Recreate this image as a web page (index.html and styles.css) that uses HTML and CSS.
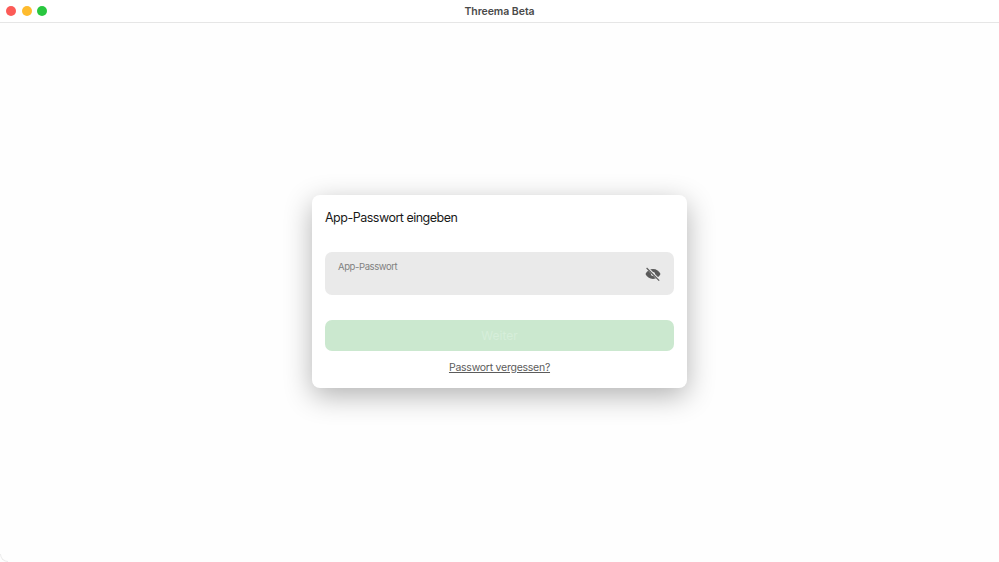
FILE: index.html
```html
<!DOCTYPE html>
<html lang="de">
<head>
  <meta charset="UTF-8">
  <title>Threema Beta</title>
  <link rel="stylesheet" href="styles.css">
</head>
<body>

  <div class="window">
    <span class="corner top-left"></span>
    <span class="corner bottom-left"></span>

    <div class="titlebar">
      <div class="traffic">
        <span class="light red"></span>
        <span class="light yellow"></span>
        <span class="light green"></span>
      </div>
      <div class="app-title">Threema Beta</div>
    </div>

    <div class="main-content">
      <div class="card">
        <h2>App-Passwort eingeben</h2>

        <div class="field">
          <label>App-Passwort</label>
          <svg class="eye" width="16" height="14" viewBox="0 0 16 14">
            <path d="M8 2.1C4.6 2.1 1.7 4.2.5 7c1.2 2.8 4.1 4.9 7.5 4.9s6.3-2.1 7.5-4.9C14.3 4.2 11.4 2.1 8 2.1z" fill="#5a5a5a"/>
            <circle cx="8" cy="7" r="2.1" fill="#eaeaea"/>
            <path d="M2.2.9l12 12.2" stroke="#eaeaea" stroke-width="2.6"/>
            <path d="M1.6 1l12.6 12.6" stroke="#5a5a5a" stroke-width="1.2"/>
          </svg>
        </div>

        <button class="next">Weiter</button>
        <a class="forgot" href="#">Passwort vergessen?</a>
      </div>
    </div>
  </div>

</body>
</html>
```

FILE: styles.css
```css
html, body {
  height: 100%;
}

body {
  margin: 0;
  font-family: 'Inter', 'Liberation Sans', sans-serif;
  background-color: #fefefe;
  overflow: hidden;
}

.window {
  height: 100%;
  position: relative;
  display: flex;
  flex-direction: column;
}

.corner {
  position: absolute;
  left: 0;
  width: 8px;
  height: 8px;
  box-sizing: border-box;
  border-left: 1px solid #ececec;
}

.top-left {
  top: 0;
  border-top: 1px solid #ececec;
  border-top-left-radius: 8px;
}

.bottom-left {
  bottom: 0;
  border-bottom: 1px solid #ececec;
  border-bottom-left-radius: 8px;
}

.titlebar {
  height: 22px;
  flex-shrink: 0;
  position: relative;
  display: flex;
  align-items: center;
  justify-content: center;
  background-color: #fff;
  border-bottom: 1px solid #e6e6e6;
}

.traffic {
  position: absolute;
  left: 6px;
  top: 6px;
  display: flex;
  gap: 5.5px;
}

.light {
  width: 10px;
  height: 10px;
  border-radius: 50%;
}

.red { background-color: #fc5b57; }
.yellow { background-color: #febb2e; }
.green { background-color: #29c73f; }

.app-title {
  font-size: 10.5px;
  font-weight: 600;
  letter-spacing: -0.05px;
  color: #4a4a4a;
}

.main-content {
  flex: 1;
  display: flex;
  align-items: center;
  justify-content: center;
  padding-bottom: 2px;
}

.card {
  width: 375px;
  height: 193px;
  box-sizing: border-box;
  padding: 13px 13px 12px;
  background-color: #fff;
  border-radius: 8px;
  box-shadow: 0 8px 28px rgba(0,0,0,0.3);
  display: flex;
  flex-direction: column;
}

.card h2 {
  margin: 0;
  font-size: 12.5px;
  line-height: 20px;
  font-weight: 400;
  letter-spacing: -0.5px;
  color: #1a1a1a;
}

.field {
  height: 43px;
  margin-top: 24px;
  padding: 0 13px;
  background-color: #eaeaea;
  border-radius: 7px;
  position: relative;
}

.field label {
  display: block;
  padding-top: 9px;
  font-size: 9.5px;
  line-height: 12px;
  letter-spacing: -0.4px;
  color: #808080;
}

.eye {
  position: absolute;
  right: 13px;
  top: 15px;
}

.next {
  height: 31px;
  margin-top: 25px;
  border: none;
  border-radius: 7px;
  background-color: #cbe8cf;
  color: #d6eeda;
  font-family: inherit;
  font-size: 12px;
}

.forgot {
  margin-top: 9px;
  padding-top: 1px;
  text-align: center;
  font-size: 10.5px;
  line-height: 14px;
  letter-spacing: -0.25px;
  color: #5c5c5c;
}
```
